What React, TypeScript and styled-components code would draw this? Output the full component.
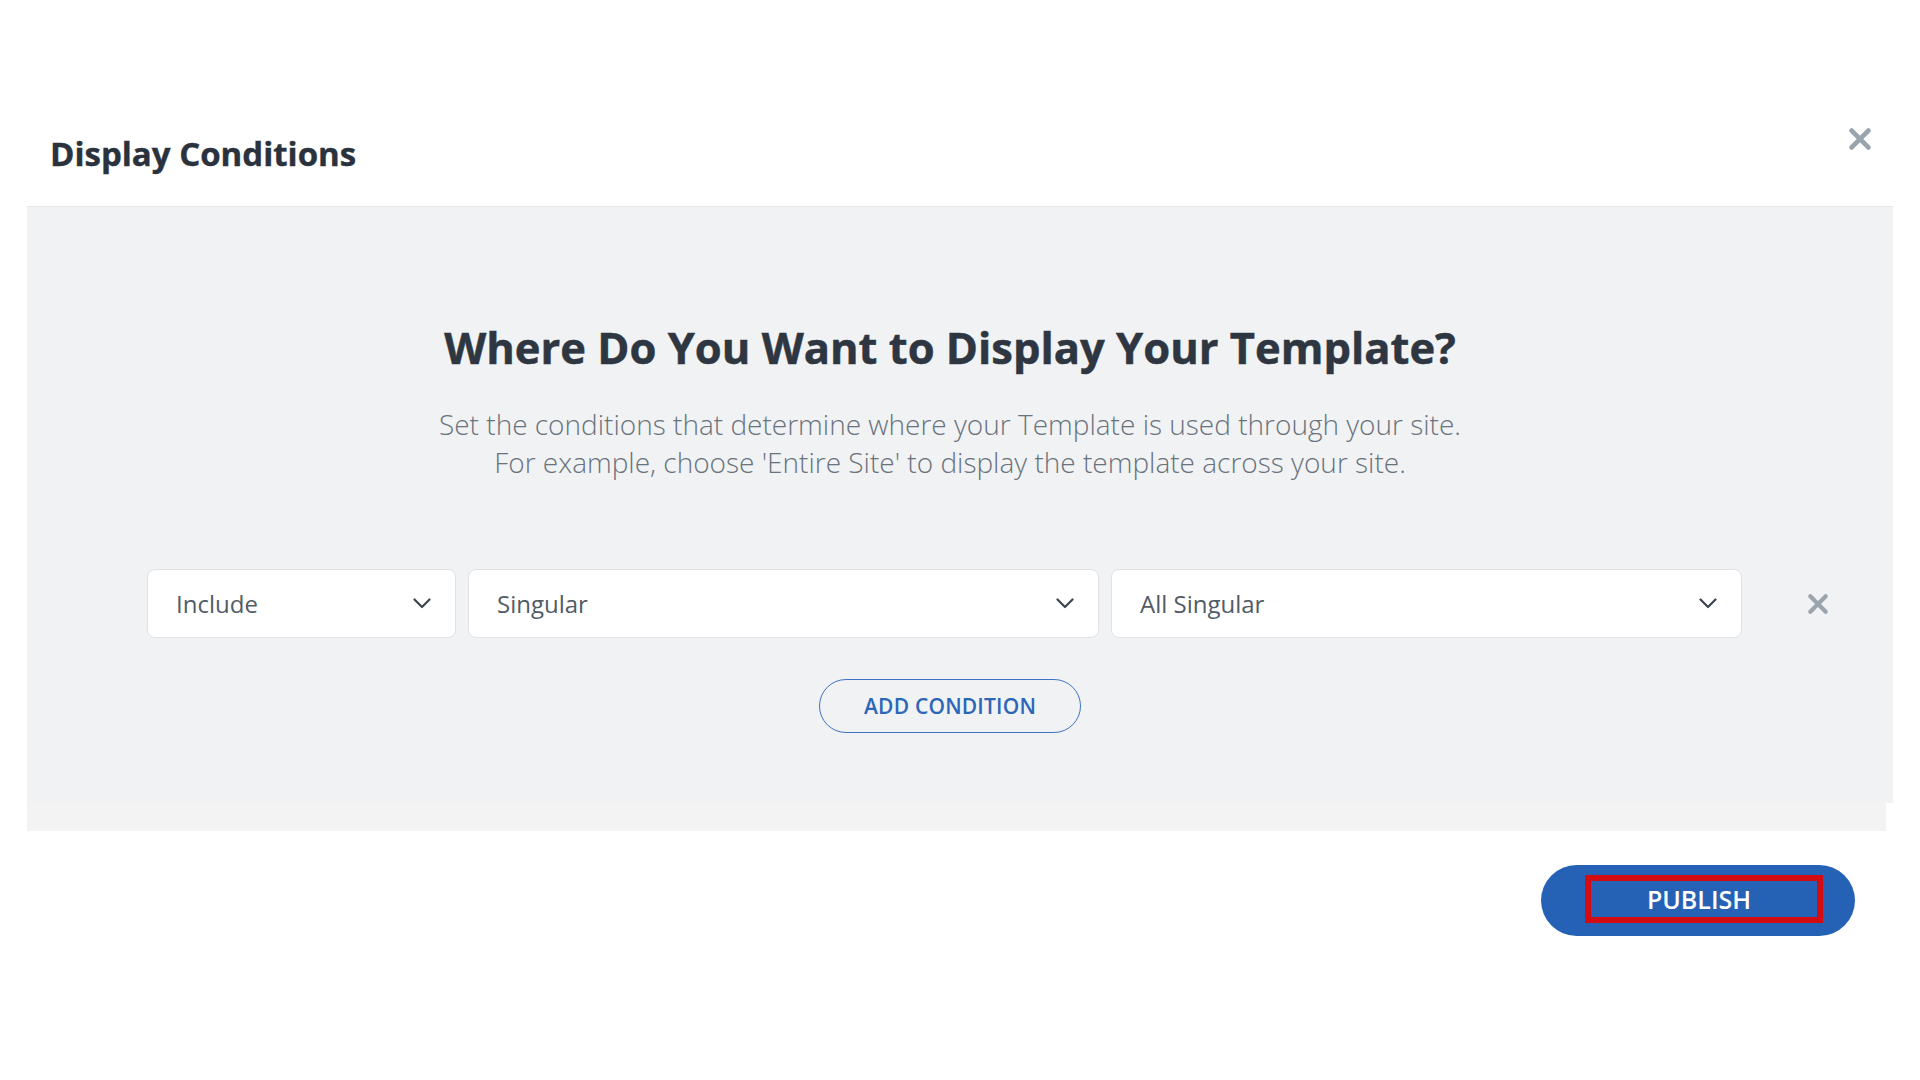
import React from 'react';
import styled, { createGlobalStyle } from 'styled-components';

const GlobalStyle = createGlobalStyle`
    html, body {
        margin: 0;
        padding: 0;
        background: #ffffff;
        font-family: "Open Sans", "Noto Sans", sans-serif;
    }
    * {
        box-sizing: border-box;
    }
`;

const Page = styled.div`
    width: 1920px;
    height: 1080px;
    background: #ffffff;
    display: flex;
    flex-direction: column;
    overflow: hidden;
`;

const Header = styled.div`
    height: 206px;
    padding: 129px 44px 0 50px;
    display: flex;
    justify-content: space-between;
    align-items: flex-start;
`;

const Title = styled.h2`
    margin: 0;
    font-size: 33px;
    line-height: 50px;
    font-weight: 700;
    color: #2a323d;
    -webkit-text-stroke: 0.4px #2a323d;
`;

const IconButton = styled.button<{ $size: number }>`
    width: ${p => p.$size + 8}px;
    height: ${p => p.$size + 8}px;
    padding: 0;
    border: none;
    background: none;
    cursor: pointer;
    display: flex;
    align-items: center;
    justify-content: center;
    color: #9aa4ad;
`;

const CloseButton = styled(IconButton)`
    margin-top: -6px;
`;

const Panel = styled.div`
    margin: 0 27px;
    border-top: 1px solid #e5e7ea;
    background: #f1f2f4;
    height: 597px;
    padding: 112px 20px 0 0;
    display: flex;
    flex-direction: column;
    align-items: center;
`;

const PanelFoot = styled.div`
    margin: 0 34px 0 27px;
    height: 28px;
    background: #f3f3f4;
`;

const Heading = styled.h1`
    margin: 0;
    font-size: 43.5px;
    line-height: 58px;
    font-weight: 700;
    color: #2e3641;
    -webkit-text-stroke: 0.5px #2e3641;
    text-align: center;
`;

const Subtitle = styled.p`
    margin: 28px 0 0;
    font-size: 28px;
    line-height: 38px;
    font-weight: 300;
    color: #69737d;
    text-align: center;
`;

const ConditionRow = styled.div`
    align-self: stretch;
    margin-top: 88px;
    padding-left: 120px;
    display: flex;
    align-items: center;
    gap: 12px;
`;

const Select = styled.div<{ $width: number }>`
    width: ${p => p.$width}px;
    height: 69px;
    background: #ffffff;
    border: 1px solid #dfe1e5;
    border-radius: 8px;
    padding: 0 24px 0 28px;
    display: flex;
    align-items: center;
    justify-content: space-between;
    font-size: 24px;
    color: #515c67;
`;

const RemoveButton = styled(IconButton)`
    margin-left: 49px;
`;

const AddButton = styled.button`
    margin-top: 41px;
    width: 262px;
    height: 54px;
    border: 1.5px solid #3f73c6;
    border-radius: 27px;
    background: transparent;
    color: #2c66b8;
    font-family: "Open Sans", "Noto Sans", sans-serif;
    font-size: 21px;
    font-weight: 600;
    letter-spacing: 0.2px;
    cursor: pointer;
`;

const Footer = styled.div`
    padding: 34px 65px 0 0;
    display: flex;
    justify-content: flex-end;
`;

const PublishButton = styled.button`
    width: 314px;
    height: 71px;
    border: none;
    border-radius: 36px;
    background: #2562b5;
    padding: 10px 32px 13px 44px;
    display: flex;
    cursor: pointer;
`;

const Highlight = styled.span`
    flex: 1;
    border: 6px solid #d20c12;
    display: flex;
    align-items: center;
    justify-content: center;
    color: #ffffff;
    font-family: "Open Sans", "Noto Sans", sans-serif;
    font-size: 25px;
    font-weight: 600;
    padding-right: 10px;
`;

const Chevron = () => (
    <svg width="18" height="11" viewBox="0 0 18 11" fill="none">
        <path d="M1.5 1.5 L9 9 L16.5 1.5" stroke="#3d4650" strokeWidth="2.2" strokeLinecap="round" strokeLinejoin="round" />
    </svg>
);

const Cross = ({ size, stroke }: { size: number; stroke: number }) => (
    <svg width={size} height={size} viewBox="0 0 20 20" fill="none">
        <path d="M3 3 L17 17 M17 3 L3 17" stroke="currentColor" strokeWidth={stroke} strokeLinecap="round" />
    </svg>
);

const conditions = [
    { label: 'Include', width: 309 },
    { label: 'Singular', width: 631 },
    { label: 'All Singular', width: 631 },
];

export default function App() {
    return (
        <>
            <GlobalStyle />
            <Page>
                <Header>
                    <Title>Display Conditions</Title>
                    <CloseButton $size={24}>
                        <Cross size={24} stroke={4} />
                    </CloseButton>
                </Header>

                <Panel>
                    <Heading>Where Do You Want to Display Your Template?</Heading>
                    <Subtitle>
                        Set the conditions that determine where your Template is used through your site.
                        <br />
                        For example, choose 'Entire Site' to display the template across your site.
                    </Subtitle>

                    <ConditionRow>
                        {conditions.map(c => (
                            <Select key={c.label} $width={c.width}>
                                <span>{c.label}</span>
                                <Chevron />
                            </Select>
                        ))}
                        <RemoveButton $size={22}>
                            <Cross size={22} stroke={3.8} />
                        </RemoveButton>
                    </ConditionRow>

                    <AddButton>ADD CONDITION</AddButton>
                </Panel>
                <PanelFoot />

                <Footer>
                    <PublishButton>
                        <Highlight>PUBLISH</Highlight>
                    </PublishButton>
                </Footer>
            </Page>
        </>
    );
}
